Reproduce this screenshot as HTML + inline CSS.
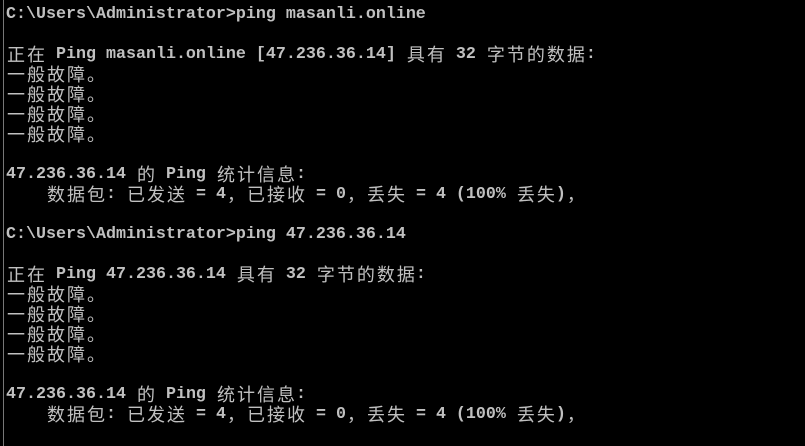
<!DOCTYPE html>
<html><head><meta charset="utf-8"><style>
html,body{margin:0;padding:0;background:#000;width:805px;height:446px;overflow:hidden}
.bar{position:absolute;left:3px;top:0;width:1px;height:446px;background:#777}
.l{position:absolute;left:6px;height:20px;line-height:20px;white-space:pre;color:#c0c0c0;font-family:"Liberation Mono",monospace;font-size:16.67px;font-weight:bold}
.c{display:inline-block;width:20px;height:20px;line-height:19px;text-align:center;font-family:"Noto Sans CJK SC",sans-serif;font-weight:normal;font-size:18px;vertical-align:top;overflow:visible}
</style></head><body>
<div class="bar"></div>
<div id="t">
<div class="l">C:\Users\Administrator&gt;ping masanli.online</div>
<div class="l"></div>
<div class="l">正在 Ping masanli.online [47.236.36.14] 具有 32 字节的数据:</div>
<div class="l">一般故障。</div>
<div class="l">一般故障。</div>
<div class="l">一般故障。</div>
<div class="l">一般故障。</div>
<div class="l"></div>
<div class="l">47.236.36.14 的 Ping 统计信息:</div>
<div class="l">    数据包: 已发送 = 4，已接收 = 0，丢失 = 4 (100% 丢失)，</div>
<div class="l"></div>
<div class="l">C:\Users\Administrator&gt;ping 47.236.36.14</div>
<div class="l"></div>
<div class="l">正在 Ping 47.236.36.14 具有 32 字节的数据:</div>
<div class="l">一般故障。</div>
<div class="l">一般故障。</div>
<div class="l">一般故障。</div>
<div class="l">一般故障。</div>
<div class="l"></div>
<div class="l">47.236.36.14 的 Ping 统计信息:</div>
<div class="l">    数据包: 已发送 = 4，已接收 = 0，丢失 = 4 (100% 丢失)，</div>
</div>
<script>
var ls=document.querySelectorAll('.l');
for(var i=0;i<ls.length;i++){
  ls[i].style.top=(5+20*i)+'px';
  ls[i].innerHTML=ls[i].innerHTML.replace(/([^\x00-\x7f])/g,'<span class="c">$1</span>');
}
</script>
</body></html>
